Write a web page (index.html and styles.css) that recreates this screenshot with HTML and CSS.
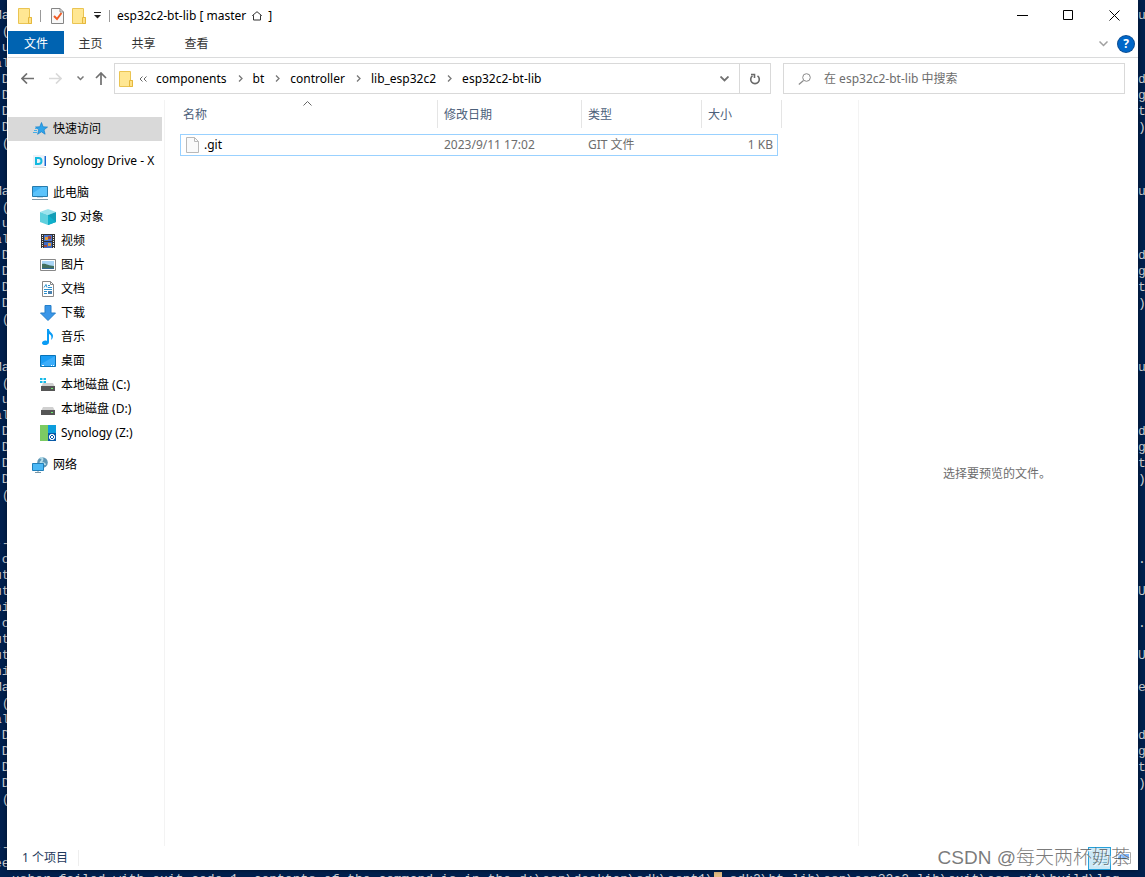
FILE: index.html
```html
<!DOCTYPE html>
<html lang="zh-CN">
<head>
<meta charset="utf-8">
<title>esp32c2-bt-lib [ master ⌂ ]</title>
<link rel="stylesheet" href="styles.css">
</head>
<body class="desktop">
<pre class="term term-left" aria-hidden="true"><code>Ma
 (
 u
al
 D
 D
 D
 D
 (


Ma
 (
 u
al
 D
 D
 D
 D
 (


Ma
 (
 u
al
 D
 D
 D
 D
 (


--
.c
ut
ut
ni
.c
ut
ut
ni
Ma
 (
al
 D
 D
 D
 D
 (


--
ee</code></pre>
<main class="window">
  <header class="titlebar">
    <div class="quick-access">
      <svg class="folder" viewBox="0 0 14 16"><path d="M.5 .5h11v9h2v6H.5z" fill="#ffe793" stroke="#eac452"/><path d="M10.500 9.500h3v6h-3z" fill="#ffe187" stroke="#e5b83d"/></svg>
      <span class="rule"></span>
      <button class="plain" aria-label="属性"><svg width="13" height="16" viewBox="0 0 13 16"><path d="M.5.5h8.500l3.500 3.500v11.500H.5z" fill="#f8f8f8" stroke="#858585"/><path d="M9 .5V4h3.500" fill="none" stroke="#858585"/><path d="M3 8l3 3 4.500-6" fill="none" stroke="#ef5b25" stroke-width="2"/></svg></button>
      <button class="plain" aria-label="新建文件夹"><svg class="folder" viewBox="0 0 14 16"><path d="M.5 .5h11v9h2v6H.5z" fill="#ffe793" stroke="#eac452"/><path d="M10.500 9.500h3v6h-3z" fill="#ffe187" stroke="#e5b83d"/></svg></button>
      <button class="plain" aria-label="自定义快速访问工具栏"><svg width="7" height="7" viewBox="0 0 7 7"><path d="M0 .5h7" stroke="#222"/><path d="M0 3h7L3.500 6.500z" fill="#222"/></svg></button>
      <span class="rule"></span>
    </div>
    <h1 class="title">esp32c2-bt-lib [ master <svg width="10" height="10" viewBox="0 0 10 10"><path d="M.5 4.500L5 .7l4.500 3.800H8.500v4.500h-7V4.500z" fill="none" stroke="#333"/></svg> ]</h1>
    <div class="win-buttons">
      <button class="plain" aria-label="最小化"><svg width="11" height="11"><path d="M0 5.500h11" stroke="#000"/></svg></button>
      <button class="plain" aria-label="最大化"><svg width="11" height="11"><path d="M.5.5h9v9h-9z" fill="none" stroke="#000"/></svg></button>
      <button class="plain" aria-label="关闭"><svg width="11" height="11"><path d="M.5.5l10 10M10.500.5l-10 10" stroke="#000"/></svg></button>
    </div>
  </header>

  <nav class="ribbon">
    <button class="tab tab-file">文件</button>
    <button class="tab">主页</button>
    <button class="tab">共享</button>
    <button class="tab">查看</button>
    <div class="ribbon-end">
      <button class="plain" aria-label="展开功能区"><svg width="9" height="6"><path d="M.5.5l4 4 4-4" fill="none" stroke="#a0a0a0" stroke-width="1.500"/></svg></button>
      <button class="plain help" aria-label="帮助">?</button>
    </div>
  </nav>

  <section class="address-row">
    <div class="history">
      <button class="plain" aria-label="后退"><svg width="13" height="11"><path d="M6 .5l-5 5 5 5M1 5.500h12" fill="none" stroke="#707070" stroke-width="1.700"/></svg></button>
      <button class="plain" aria-label="前进"><svg width="13" height="11"><path d="M7 .5l5 5-5 5M12 5.500H0" fill="none" stroke="#d9d9d9" stroke-width="1.700"/></svg></button>
      <button class="plain" aria-label="最近浏览的位置"><svg width="7" height="5"><path d="M.5.5l3 3 3-3" fill="none" stroke="#777" stroke-width="1.500"/></svg></button>
      <button class="plain up" aria-label="向上"><svg width="12" height="13"><path d="M1 6l5-5 5 5M6 1v12" fill="none" stroke="#707070" stroke-width="1.700"/></svg></button>
    </div>
    <div class="address">
      <svg class="folder" viewBox="0 0 14 16"><path d="M.5 .5h11v9h2v6H.5z" fill="#ffe793" stroke="#eac452"/><path d="M10.500 9.500h3v6h-3z" fill="#ffe187" stroke="#e5b83d"/></svg>
      <svg class="dbl" width="9" height="6"><path d="M3.500.5L1 3l2.500 2.500M7.500.5L5 3l2.500 2.500" fill="none" stroke="#666"/></svg>
      <ol class="crumbs">
        <li><a href="#">components</a><svg class="sep" width="5" height="7"><path d="M1 .5l3 3-3 3" fill="none" stroke="#777" stroke-width="1.300"/></svg></li>
        <li><a href="#">bt</a><svg class="sep" width="5" height="7"><path d="M1 .5l3 3-3 3" fill="none" stroke="#777" stroke-width="1.300"/></svg></li>
        <li><a href="#">controller</a><svg class="sep" width="5" height="7"><path d="M1 .5l3 3-3 3" fill="none" stroke="#777" stroke-width="1.300"/></svg></li>
        <li><a href="#">lib_esp32c2</a><svg class="sep" width="5" height="7"><path d="M1 .5l3 3-3 3" fill="none" stroke="#777" stroke-width="1.300"/></svg></li>
        <li><a href="#">esp32c2-bt-lib</a></li>
      </ol>
      <button class="plain drop" aria-label="以前的位置"><svg width="9" height="6"><path d="M.5.5l4 4 4-4" fill="none" stroke="#707070" stroke-width="1.800"/></svg></button>
      <button class="plain refresh" aria-label="刷新"><svg width="12" height="12" viewBox="0 0 12 12"><path d="M3.500 2.800A4.300 4.300 0 1 0 8.500 2.800M2 1.500h3.500v3.500" fill="none" stroke="#6a6a6a" stroke-width="1.600"/></svg></button>
    </div>
    <label class="search">
      <svg width="13" height="12"><circle cx="8.500" cy="4.500" r="3.800" fill="none" stroke="#8a8a8a"/><path d="M5.500 7.500L.8 11.500" stroke="#8a8a8a" stroke-width="1.200"/></svg>
      <input type="search" placeholder="在 esp32c2-bt-lib 中搜索" aria-label="搜索">
    </label>
  </section>

  <div class="content">
    <aside class="nav">
      <ul>
        <li class="selected"><svg width="16" height="16" viewBox="0 0 16 16"><path d="M9.500 1.500l1.600 4.300 4.400.3-3.500 2.700 1.100 4.400-3.700-2.400-3.800 2.500 1.200-4.500L3.500 6l4.300-.2z" fill="#2fa4ea" stroke="#1480cc" stroke-width=".7"/><path d="M2 9.500h3M1 11.500h4M3 7.500h2" stroke="#45afe9"/></svg>快速访问</li>
      </ul>
      <ul>
        <li><svg width="16" height="16" viewBox="0 0 16 16"><path d="M1 2h11v12H1z" fill="#edf2f8"/><path d="M4 5h2.500a3 3 0 0 1 0 6H4z" fill="none" stroke="#13b9df" stroke-width="2"/><path d="M12.500 3h1.500v10h-1.500z" fill="#1867d2"/><path d="M1 14.500h13" stroke="#ddd"/></svg>Synology Drive - X</li>
      </ul>
      <ul>
        <li><svg width="16" height="16" viewBox="0 0 16 16"><path d="M.5 1.500h15v10H.5z" fill="#3fb0f3" stroke="#287bab"/><path d="M1 11V8l9-6h5v9z" fill="#5bc3fb"/><path d="M5 12h6v1H5z" fill="#c5d8e3"/><path d="M0 14.500h16" stroke="#8099a8"/></svg>此电脑</li>
        <li class="child"><svg width="16" height="16" viewBox="0 0 16 16"><path d="M8 0l8 3-8 3-8-3z" fill="#9be3ed"/><path d="M0 3l8 3v10l-8-3z" fill="#5fd0de"/><path d="M16 3L8 6v10l8-3z" fill="#129db6"/><path d="M8 6l8 7-8 3z" fill="#0fb0cb"/></svg>3D 对象</li>
        <li class="child"><svg width="16" height="16" viewBox="0 0 16 16"><path d="M1 1h14v14H1z" fill="#333"/><path d="M4 2h8v6H4z" fill="#4b77cf"/><path d="M4 9h8v6H4z" fill="#3f6bc4"/><path d="M5 4h3v3H5zM8 10h3v3H8z" fill="#e09a3a"/><path d="M8 3h3v3H8zM4 12h3v2H4z" fill="#9d4740"/><path d="M2.500 2v13M13.500 2v13" stroke="#eee" stroke-dasharray="1 1"/></svg>视频</li>
        <li class="child"><svg width="16" height="16" viewBox="0 0 16 16"><path d="M.5 2.500h15v11H.5z" fill="#fff" stroke="#888"/><path d="M2 4h12v8H2z" fill="#a9d5f6"/><path d="M2 7c4-1 6 2 12 2v3H2z" fill="#42705f"/><path d="M2 11h12v1H2z" fill="#316996"/></svg>图片</li>
        <li class="child"><svg width="16" height="16" viewBox="0 0 16 16"><path d="M2.500.5h8l3 3v12h-11z" fill="#fff" stroke="#888"/><path d="M10.500.5v3h3" fill="none" stroke="#888"/><path d="M4 6.500l2-3 1 3M8 4.500h2M8 6.500h4M4 8.500h8M4 10.500h3M4 12.500h3" fill="none" stroke="#2d91ce"/><path d="M8 10h4v3H8z" fill="#4a82b0"/></svg>文档</li>
        <li class="child"><svg width="16" height="16" viewBox="0 0 16 16"><path d="M5 .5h6V8h4.500L8 15.500.5 8H5z" fill="#3a96e8" stroke="#257fc9"/></svg>下载</li>
        <li class="child"><svg width="16" height="16" viewBox="0 0 16 16"><path d="M7 0h2c0 3 4 4 4 7 0 2-1 3-2 4 1-4 0-5-2-6v8c0 4-7 4-7 1 0-2 3-3 5-2z" fill="#0a9cf5"/></svg>音乐</li>
        <li class="child"><svg width="16" height="16" viewBox="0 0 16 16"><path d="M.5 2.500h15v11H.5z" fill="#1b9ef5" stroke="#0873b8"/><path d="M1 11L15 3v10H1z" fill="#3badfa"/><path d="M2 12.500h2M11 12.500h1M13 12.500h1" stroke="#fff"/></svg>桌面</li>
        <li class="child"><svg width="16" height="16" viewBox="0 0 16 16"><path d="M0 1h2.500v2H0zM3.500 1H6v2H3.500zM0 4h2.500v2H0zM3.500 4H6v2H3.500z" fill="#14b9e8"/><path d="M3 6h10l2 4H1z" fill="#d0d0d0"/><path d="M1 9h14v5H1z" fill="#555"/><path d="M11 11h2v1h-2z" fill="#6bec6b"/></svg>本地磁盘 (C:)</li>
        <li class="child"><svg width="16" height="16" viewBox="0 0 16 16"><path d="M3 6h10l2 4H1z" fill="#d0d0d0"/><path d="M1 9h14v5H1z" fill="#555"/><path d="M11 11h2v1h-2z" fill="#6bec6b"/></svg>本地磁盘 (D:)</li>
        <li class="child"><svg width="16" height="16" viewBox="0 0 16 16"><path d="M0 0h8v16H0z" fill="#7ccb62"/><path d="M8 0h8v16H8z" fill="#0c9ddd"/><path d="M8 8h8v8H8z" fill="#0758a6"/><path d="M10 10l4 4M14 10l-4 4" stroke="#fff"/><circle cx="12" cy="12" r="2.700" fill="none" stroke="#fff"/></svg>Synology (Z:)</li>
      </ul>
      <ul>
        <li><svg width="16" height="16" viewBox="0 0 16 16"><circle cx="10.500" cy="5.500" r="5.300" fill="#5d96b5"/><path d="M8 1c3-1 3 2 1 4s4 0 4 3" stroke="#b5dce9" stroke-width="2" fill="none"/><path d="M.5 6.500h11v7H.5z" fill="#4bb8f5" stroke="#207fb9"/><path d="M3 15.500h6M6 14v1" stroke="#7997a8"/></svg>网络</li>
      </ul>
    </aside>

    <section class="files">
      <table>
        <colgroup><col class="c-name"><col class="c-date"><col class="c-type"><col class="c-size"><col class="c-end"></colgroup>
        <thead>
          <tr><th class="sorted">名称<svg width="9" height="5"><path d="M.5 4.500l4-4 4 4" fill="none" stroke="#666"/></svg></th><th>修改日期</th><th>类型</th><th colspan="2">大小</th></tr>
        </thead>
        <tbody>
          <tr><td class="name"><svg width="13" height="16"><path d="M.5.5h8l4 4v11H.5z" fill="#fafafa" stroke="#b9b9b9"/><path d="M8.500.5v4h4" fill="none" stroke="#b9b9b9"/></svg>.git</td><td>2023/9/11 17:02</td><td>GIT 文件</td><td class="size">1 KB</td></tr>
        </tbody>
      </table>
    </section>

    <aside class="preview">选择要预览的文件。</aside>
  </div>

  <footer class="status">
    <span class="count">1 个项目</span>
    <div class="views">
      <button class="plain view active" aria-label="详细信息"><svg width="14" height="12"><path d="M0 1.500h14M0 4.500h14M0 7.500h14M0 10.500h14" stroke="#7eb3ca"/></svg></button>
      <button class="plain view" aria-label="大图标"><svg width="15" height="12"><path d="M.5.5h14v11H.5z" fill="#fff" stroke="#aaa"/><path d="M2 2h11v4H2z" fill="#78b5ff"/><path d="M2 6h11v2H2z" fill="#51788c"/></svg></button>
    </div>
    <span class="watermark">CSDN @每天两杯奶茶</span>
  </footer>
</main>
<pre class="term term-right" aria-hidden="true"><code>u



d
g
t
)



u



d
g
t
)



u



d
g
t
)




.

U

.

U

e


d
g
t
)</code></pre>
<pre class="term term-bottom" aria-hidden="true"> usher failed with exit code 1, contents of the command is in the d:\esp\desktop\sdk\espt1\<span class="cursor"> </span> sdk2\bt.lib\esp\esp32c2.lib\exit\esp.git\build\log</pre>
</body>
</html>
```
FILE: styles.css
```css
* { box-sizing: border-box; }

body, h1, ul, ol, pre { margin: 0; padding: 0; }
ul, ol { list-style: none; }
svg { display: block; flex: none; }

.desktop {
  display: grid;
  grid-template-columns: 7px minmax(0, 1fr) 7px;
  grid-template-rows: minmax(0, 1fr) 7px;
  height: 100vh;
  overflow: hidden;
  background: #00204e;
  color: #000;
  font: 12px/16px "Noto Sans", "Noto Sans CJK SC", sans-serif;
}

.term {
  overflow: hidden;
  color: #cfd2d6;
  font: 13px/16px "Liberation Mono", monospace;
}
.term code { display: block; font: inherit; }
.term-left, .term-right { padding-top: 8px; }
.term-left code { margin-left: -6px; }
.term-bottom { grid-column: 1 / -1; padding: 2px 0 0 4px; }
.cursor { background: #e3bd83; }

.window {
  position: relative;
  display: flex;
  flex-direction: column;
  min-width: 0;
  padding-left: 1px;
  background: #fff;
  box-shadow: 0 0 5px rgba(0, 0, 0, .5);
}

button, input { font: inherit; color: inherit; }
.plain {
  display: flex;
  align-items: center;
  justify-content: center;
  padding: 0;
  border: 0;
  background: none;
}
.folder { width: 14px; height: 16px; }

.titlebar { display: flex; align-items: center; height: 31px; padding: 0 1px 0 10px; }
.quick-access { display: flex; align-items: center; gap: 8px; }
.rule { width: 1px; height: 12px; background: #999; }
.quick-access .rule:first-of-type { margin-right: 2px; }
.title {
  display: flex;
  align-items: center;
  gap: 6px;
  flex: 1;
  margin-left: 7px;
  font-size: 12px;
  font-weight: 400;
}
.win-buttons { display: flex; }
.win-buttons .plain { width: 46px; height: 31px; }

.ribbon { display: flex; height: 27px; padding-bottom: 3px; border-bottom: 1px solid #dadbdc; }
.tab { width: 53px; padding: 2px 0 0; border: 0; background: none; color: #333; }
.tab-file { width: 56px; background: #0063b1; color: #fff; }
.ribbon-end { display: flex; align-items: center; gap: 10px; margin-left: auto; padding: 3px 4px 0 0; }
.help {
  width: 16px;
  height: 16px;
  border-radius: 50%;
  background: #0067c8;
  box-shadow: 0 0 0 1px #0b4c91;
  color: #fff;
  font-weight: 700;
}

.address-row { display: flex; padding: 5px 13px 5px 0; }
.history { display: flex; align-items: center; gap: 15px; width: 106px; padding-left: 13px; }
.history .up { margin-left: -4px; }
.address {
  display: flex;
  align-items: center;
  flex: 1;
  height: 31px;
  padding-left: 4px;
  border: 1px solid #d9d9d9;
}
.dbl { margin: 0 8px 0 6px; }
.crumbs { display: flex; flex: 1; }
.crumbs li { display: flex; align-items: center; }
.crumbs a { color: #000; text-decoration: none; }
.sep { margin: 0 10px 0 11px; }
.drop { width: 29px; height: 29px; }
.refresh { width: 31px; height: 29px; border-left: 1px solid #d9d9d9; }
.search {
  display: flex;
  align-items: center;
  gap: 13px;
  width: 342px;
  margin-left: 12px;
  padding-left: 14px;
  border: 1px solid #d9d9d9;
}
.search input { flex: 1; min-width: 0; padding: 0; border: 0; outline: 0; background: none; }
.search input::placeholder { color: #6d6d6d; opacity: 1; }

.content { display: flex; flex: 1; min-height: 0; padding-top: 1px; }
.nav { width: 157px; padding: 17px 2px 0 0; border-right: 1px solid #f3f3f3; overflow: hidden; }
.nav ul + ul { margin-top: 8px; }
.nav li {
  display: flex;
  align-items: center;
  gap: 5px;
  height: 24px;
  padding-left: 24px;
  white-space: nowrap;
}
.nav .child { padding-left: 32px; }
.nav .selected { background: #d9d9d9; }

.files { flex: 1; min-width: 0; padding-left: 15px; }
table { width: 602px; table-layout: fixed; border-collapse: separate; border-spacing: 0; }
.c-name { width: 258px; }
.c-date { width: 144px; }
.c-type { width: 120px; }
.c-size { width: 76px; }
.c-end { width: 4px; }
th {
  height: 28px;
  padding: 2px 0 0 6px;
  border-right: 1px solid #e5e5e5;
  color: #4c607a;
  font-weight: 400;
  text-align: left;
}
th:first-child { padding-left: 3px; }
.sorted { position: relative; }
.sorted svg { position: absolute; top: 1px; left: 50%; margin-left: -6px; }
thead::after { content: ""; display: block; height: 6px; }
td {
  height: 22px;
  padding: 0 0 0 6px;
  border: solid #99d1ff;
  border-width: 1px 0;
  color: #6d6d6d;
}
td.name {
  display: flex;
  align-items: center;
  gap: 5px;
  padding-left: 5px;
  border-left-width: 1px;
  color: #000;
}
td.size { padding-right: 4px; border-right-width: 1px; text-align: right; }

.preview {
  display: flex;
  align-items: center;
  justify-content: center;
  width: 280px;
  padding: 2px 3px 0 0;
  border-left: 1px solid #f3f3f3;
  color: #6d6d6d;
}

.status { position: relative; display: flex; align-items: center; height: 24px; padding-left: 14px; color: #1e395b; }
.count { padding-right: 10px; border-right: 1px solid #eee; }
.views { display: flex; gap: 1px; margin-left: auto; padding-right: 3px; }
.view { width: 23px; height: 23px; }
.view.active { border: 1px solid #26a0da; background: #cbe8f6; }
.watermark {
  position: absolute;
  right: 8px;
  bottom: 0;
  color: rgba(80, 80, 80, .75);
  font: 300 19px/24px "Liberation Sans", "Noto Sans CJK SC", sans-serif;
  text-shadow: 1px 1px 1px #fff;
  white-space: nowrap;
}
```
